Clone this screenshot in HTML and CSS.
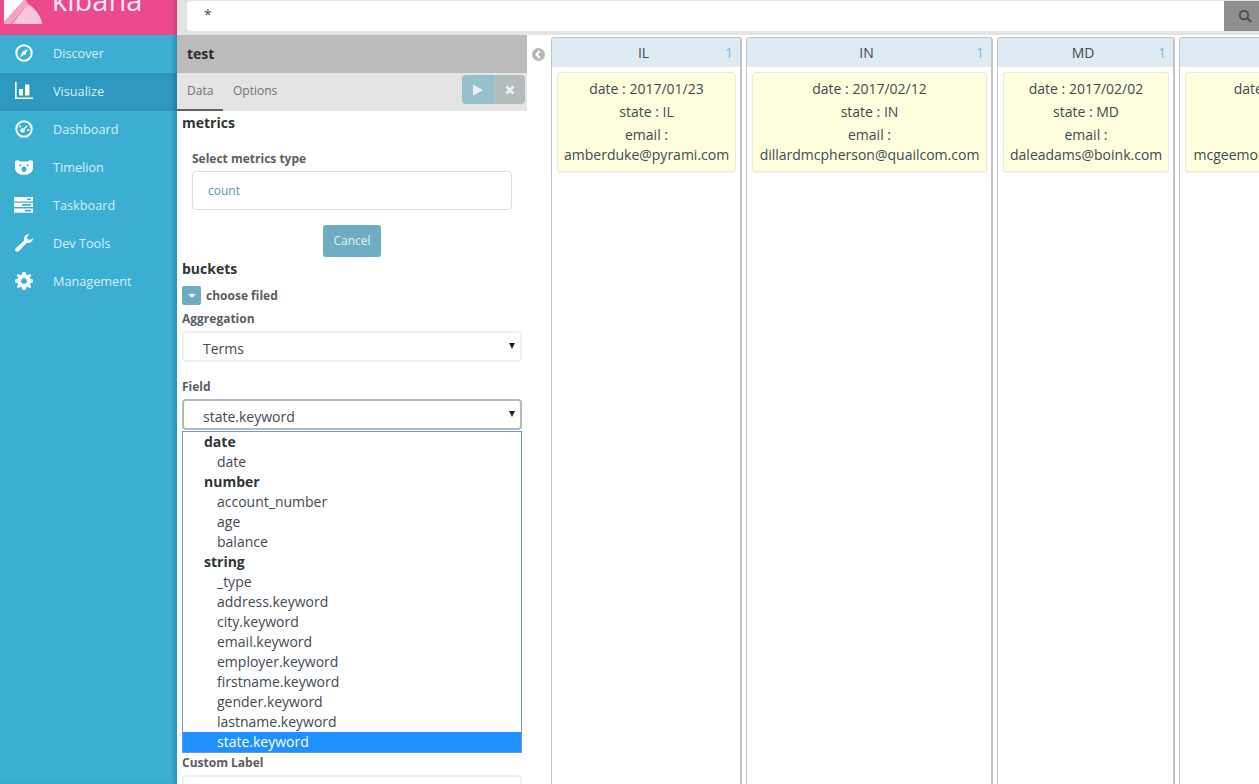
FILE: index.html
```html
<!DOCTYPE html>
<html lang="en">
<head>
  <meta charset="UTF-8">
  <title>test - Kibana</title>
  <link rel="stylesheet" href="styles.css">
</head>
<body>
  <nav class="sidebar">
    <div class="logo">
      <svg class="logo-mark" width="42" height="24" viewBox="0 0 42 24">
        <path d="M4 0 H24 L4 22 Z" fill="#fff"/>
        <path d="M4 24 V22 L24 0 H26 L28 4 L11 24 Z" fill="#f6a4c6"/>
        <path d="M12 24 L28 4 C36 9 41 16 42 24 Z" fill="#fac6dc"/>
      </svg>
      <span class="logo-text">kibana</span>
    </div>
    <a class="nav-item">
      <svg class="nav-icon" width="18" height="18" viewBox="0 0 18 18"><circle cx="9" cy="9" r="7.7" fill="none" stroke="#fff" stroke-width="2"/><path d="M13 5 L10.4 10.4 L5 13 L7.6 7.6 Z" fill="#fff"/></svg>
      Discover
    </a>
    <a class="nav-item active">
      <svg class="nav-icon" width="18" height="18" viewBox="0 0 18 18"><path d="M0 0 H1.6 V15.4 H18 V17 H0 Z M4 7 H8 V13.6 H4 Z M10 2.5 H14.4 V13.6 H10 Z" fill="#fff"/></svg>
      Visualize
    </a>
    <a class="nav-item">
      <svg class="nav-icon" width="18" height="18" viewBox="0 0 18 18"><circle cx="9" cy="9" r="7.7" fill="none" stroke="#fff" stroke-width="2"/><circle cx="7.6" cy="10.4" r="2.2" fill="#fff"/><path d="M8 10 L12 6" stroke="#fff" stroke-width="1.4"/><circle cx="5.2" cy="6.6" r="1" fill="#fff"/><circle cx="13.2" cy="10" r="1" fill="#fff"/></svg>
      Dashboard
    </a>
    <a class="nav-item">
      <svg class="nav-icon" width="18" height="18" viewBox="0 0 18 18"><path fill-rule="evenodd" d="M0 4 C0 2 3 1.5 5 3.5 H13 C15 1.5 18 2 18 4 V10 C18 14 14 17 9 17 C4 17 0 14 0 10 Z M5.5 6.2 a1 1 0 1 0 .01 0 Z M12.5 6.2 a1 1 0 1 0 .01 0 Z M9 8.5 C7 8.5 6.5 10 6.5 11.5 C6.5 13 7.5 14 9 14 C10.5 14 11.5 13 11.5 11.5 C11.5 10 11 8.5 9 8.5 Z" fill="#fff"/></svg>
      Timelion
    </a>
    <a class="nav-item">
      <svg class="nav-icon wide" width="19" height="18" viewBox="0 0 19 18"><path fill-rule="evenodd" d="M0 1 H19 V5.4 H0 Z M13 2.4 V4 H17 V2.4 Z M0 6.7 H19 V11.1 H0 Z M8 8.1 V9.7 H17 V8.1 Z M0 12.4 H19 V16.8 H0 Z M11 13.8 V15.4 H17 V13.8 Z" fill="#fff"/></svg>
      Taskboard
    </a>
    <a class="nav-item">
      <svg class="nav-icon" width="18" height="18" viewBox="0 0 18 18"><path d="M18 4 C18 7.5 15 9.6 11.8 8.8 L4.2 16.8 C3 18 1 18 .4 16.8 C-.2 15.8 0 14.8 1 14 L9.2 6.4 C8.4 3.2 10.6 0 14.2 0 L11.6 3.4 L13 5.6 L15.6 5.8 Z" fill="#fff"/></svg>
      Dev Tools
    </a>
    <a class="nav-item">
      <svg class="nav-icon" width="18" height="18" viewBox="0 0 18 18"><path fill-rule="evenodd" d="M7.4 0 H10.6 L11 2.5 L12.6 3.2 L14.7 1.7 L16.3 3.3 L14.8 5.4 L15.5 7 L18 7.4 V10.6 L15.5 11 L14.8 12.6 L16.3 14.7 L14.7 16.3 L12.6 14.8 L11 15.5 L10.6 18 H7.4 L7 15.5 L5.4 14.8 L3.3 16.3 L1.7 14.7 L3.2 12.6 L2.5 11 L0 10.6 V7.4 L2.5 7 L3.2 5.4 L1.7 3.3 L3.3 1.7 L5.4 3.2 L7 2.5 Z M9 6 a3 3 0 1 0 .01 0 Z" fill="#fff"/></svg>
      Management
    </a>
  </nav>

  <main class="main">
    <div class="query-bar">
      <div class="query-input">*</div>
      <div class="query-btn">
        <svg width="14" height="14" viewBox="0 0 14 14"><circle cx="6" cy="6" r="4.2" fill="none" stroke="#505050" stroke-width="2"/><path d="M9 9 L13 13" stroke="#505050" stroke-width="2.4"/></svg>
      </div>
    </div>

    <div class="content">
      <section class="panel">
        <div class="panel-title">test</div>
        <div class="tabs">
          <span class="tab selected">Data</span>
          <span class="tab">Options</span>
          <div class="tab-actions">
            <span class="run-btn"><svg width="12" height="12" viewBox="0 0 12 12"><path d="M1 .5 L11 6 L1 11.5 Z" fill="#e8f1f4"/></svg></span>
            <span class="close-btn"><svg width="10" height="10" viewBox="0 0 10 10"><path d="M1.5 1.5 L8.5 8.5 M8.5 1.5 L1.5 8.5" stroke="#eef1f1" stroke-width="2.6"/></svg></span>
          </div>
        </div>
        <div class="panel-body">
          <h4 class="section-title">metrics</h4>
          <div class="metrics-box">
            <label class="metrics-label">Select metrics type</label>
            <div class="metrics-input">count</div>
            <div class="cancel-row"><button type="button" class="cancel-btn">Cancel</button></div>
          </div>
          <h4 class="section-title">buckets</h4>
          <div class="choose-row">
            <span class="toggle-btn"><span class="toggle-arrow"></span></span>
            <span class="choose-label">choose filed</span>
          </div>
          <label class="field-label">Aggregation</label>
          <div class="select-box">Terms<span class="select-arrow"></span></div>
          <label class="field-label field-gap">Field</label>
          <div class="select-box open">state.keyword<span class="select-arrow"></span></div>
          <ul class="options">
            <li class="group">date</li>
            <li>date</li>
            <li class="group">number</li>
            <li>account_number</li>
            <li>age</li>
            <li>balance</li>
            <li class="group">string</li>
            <li>_type</li>
            <li>address.keyword</li>
            <li>city.keyword</li>
            <li>email.keyword</li>
            <li>employer.keyword</li>
            <li>firstname.keyword</li>
            <li>gender.keyword</li>
            <li>lastname.keyword</li>
            <li class="current">state.keyword</li>
          </ul>
          <label class="field-label custom-label">Custom Label</label>
          <div class="text-box"></div>
        </div>
      </section>

      <div class="collapse-col">
        <svg width="13" height="13" viewBox="0 0 13 13"><circle cx="6.5" cy="6.5" r="6.5" fill="#b5b5b5"/><path d="M7.8 3 L4.4 6.5 L7.8 10" fill="none" stroke="#fff" stroke-width="2"/></svg>
      </div>

      <div class="board">
        <div class="column col-il">
          <div class="column-head"><span>IL</span><span class="count">1</span></div>
          <div class="card">
            <p>date : 2017/01/23</p>
            <p>state : IL</p>
            <p class="email">email :<br>amberduke@pyrami.com</p>
          </div>
        </div>
        <div class="column col-in">
          <div class="column-head"><span>IN</span><span class="count">1</span></div>
          <div class="card">
            <p>date : 2017/02/12</p>
            <p>state : IN</p>
            <p class="email">email :<br>dillardmcpherson@quailcom.com</p>
          </div>
        </div>
        <div class="column col-md">
          <div class="column-head"><span>MD</span><span class="count">1</span></div>
          <div class="card">
            <p>date : 2017/02/02</p>
            <p>state : MD</p>
            <p class="email">email :<br>daleadams@boink.com</p>
          </div>
        </div>
        <div class="column col-last">
          <div class="column-head"><span>MS</span><span class="count">1</span></div>
          <div class="card">
            <p>date : 2017/02/20</p>
            <p>state : MS</p>
            <p class="email">email :<br>mcgeemooney@zillidium.com</p>
          </div>
        </div>
      </div>
    </div>
  </main>
</body>
</html>
```

FILE: styles.css
```css
* {
  box-sizing: border-box;
}
html, body {
  height: 100%;
}
body {
  margin: 0;
  display: flex;
  overflow: hidden;
  font-family: 'Open Sans', sans-serif;
  color: #3f4a52;
  background: #fff;
}

/* sidebar */
.sidebar {
  width: 177px;
  flex: none;
  background: #3caed2;
  box-shadow: inset -5px 0 4px -2px rgba(0,0,0,0.18);
}
.logo {
  height: 35px;
  background: #ec4a8c;
  display: flex;
  align-items: flex-end;
  overflow: hidden;
  box-shadow: inset -5px 0 4px -2px rgba(0,0,0,0.12);
}
.logo-mark {
  flex: none;
  margin-bottom: 11px;
}
.logo-text {
  margin-left: 10px;
  margin-bottom: 20px;
  font-size: 29px;
  line-height: 30px;
  color: #fdeaf2;
}
.nav-item {
  height: 38px;
  padding: 0 0 2px 15px;
  display: flex;
  align-items: center;
  font-size: 12.7px;
  color: #d6f0f8;
}
.nav-item.active {
  background: #2e98c1;
  box-shadow: inset -5px 0 4px -2px rgba(0,0,0,0.18);
}
.nav-icon {
  flex: none;
  margin-right: 20px;
}
.nav-icon.wide {
  margin-left: -1px;
}

/* query bar */
.main {
  flex: 1;
  min-width: 0;
  display: flex;
  flex-direction: column;
}
.query-bar {
  height: 35px;
  flex: none;
  padding: 1px 0 4px 10px;
  background: #e4e4e4;
  display: flex;
}
.query-input {
  flex: 1;
  padding: 2px 0 0 17px;
  background: #fff;
  border-radius: 4px 0 0 4px;
  font-size: 14px;
  line-height: 24px;
  color: #4a4a4a;
}
.query-btn {
  width: 35px;
  flex: none;
  padding-left: 7px;
  background: #8f8f8f;
  display: flex;
  align-items: center;
  justify-content: center;
}

/* editor panel */
.content {
  flex: 1;
  min-height: 0;
  display: flex;
}
.panel {
  width: 350px;
  flex: none;
}
.panel-title {
  height: 38px;
  padding-left: 10px;
  background: #bcbcbc;
  font-size: 14px;
  font-weight: 700;
  line-height: 38px;
  color: #2d2d2d;
}
.tabs {
  height: 38px;
  background: #e4e4e4;
  display: flex;
  align-items: stretch;
  font-size: 12px;
}
.tab {
  padding: 0 11px 0 10px;
  line-height: 36px;
  color: #6d7378;
}
.tab.selected {
  width: 46px;
  border-bottom: 2px solid #5f6468;
}
.tab-actions {
  margin: 2px 2px 7px auto;
  display: flex;
}
.run-btn, .close-btn {
  display: flex;
  align-items: center;
  justify-content: center;
}
.run-btn {
  width: 32px;
  background: #97c0cd;
  border-radius: 4px 0 0 4px;
}
.close-btn {
  width: 31px;
  background: #b4bcbe;
  border-radius: 0 4px 4px 0;
}
.panel-body {
  padding: 0 5px;
}
.section-title {
  margin: 0;
  font-size: 14px;
  font-weight: 700;
  line-height: 24px;
  color: #2f3437;
}
.metrics-box {
  padding: 16px 10px 0;
}
.metrics-label {
  display: block;
  font-size: 12px;
  font-weight: 700;
  line-height: 16px;
  color: #5a5f63;
}
.metrics-input {
  height: 39px;
  margin-top: 4px;
  padding-left: 15px;
  border: 1px solid #dddddd;
  border-radius: 4px;
  font-size: 12px;
  line-height: 37px;
  color: #5f94ab;
}
.cancel-row {
  margin-top: 15px;
  text-align: center;
}
.cancel-btn {
  width: 58px;
  height: 32px;
  padding: 0 0 2px;
  border: none;
  border-radius: 3px;
  background: #6eacc1;
  font-family: 'Open Sans', sans-serif;
  font-size: 12px;
  color: #e4f1f5;
}
.choose-row {
  margin-top: 5px;
  height: 19px;
  display: flex;
  align-items: center;
}
.toggle-btn {
  width: 19px;
  height: 19px;
  border-radius: 2px;
  background: #6eacc1;
  display: flex;
  align-items: center;
  justify-content: center;
}
.toggle-arrow {
  width: 0;
  height: 0;
  border-left: 4px solid transparent;
  border-right: 4px solid transparent;
  border-top: 4px solid #e8f3f6;
}
.choose-label {
  margin-left: 5px;
  font-size: 12px;
  font-weight: 700;
  color: #5a5f63;
}
.field-label {
  display: block;
  margin-top: 6px;
  font-size: 12px;
  font-weight: 700;
  line-height: 16px;
  color: #5a5f63;
}
.field-gap {
  margin-top: 17px;
}
.select-box {
  position: relative;
  height: 31px;
  margin-top: 4px;
  padding-left: 19px;
  border: 2px solid #edf1f0;
  border-radius: 4px;
  font-size: 14px;
  line-height: 31px;
  color: #3f4a52;
}
.select-box.open {
  border-color: #b2b8bc;
}
.select-arrow {
  position: absolute;
  right: 5px;
  top: 10px;
  width: 0;
  height: 0;
  border-left: 3px solid transparent;
  border-right: 3px solid transparent;
  border-top: 6px solid #222;
}
.options {
  list-style: none;
  margin: 1px 0 0;
  padding: 0;
  border: 1px solid #6f97d2;
  font-size: 14px;
  line-height: 20px;
  color: #3f4a52;
}
.options li {
  height: 20px;
  padding-left: 34px;
}
.options li.group {
  padding-left: 21px;
  font-weight: 700;
  color: #2f3437;
}
.options li.current {
  background: #1e90ff;
  color: #fff;
}
.custom-label {
  margin-top: 2px;
}
.text-box {
  height: 34px;
  margin-top: 4px;
  border: 2px solid #edf1f0;
  border-radius: 4px;
}

/* board */
.collapse-col {
  width: 24px;
  flex: none;
  padding: 9px 0 0 5px;
}
.board {
  flex: 1;
  min-width: 0;
  padding-top: 2px;
  display: flex;
  gap: 4px;
  overflow: hidden;
}
.column {
  flex: none;
  border: 1px solid #c4c4c4;
  border-width: 1px 2px 0 1px;
  border-radius: 3px 3px 0 0;
  background: #fff;
}
.col-il { width: 191px; }
.col-in { width: 247px; }
.col-md { width: 178px; }
.col-last { width: 224px; }
.column-head {
  position: relative;
  height: 29px;
  padding-right: 5px;
  background: #dfebf2;
  text-align: center;
  font-size: 14px;
  line-height: 29px;
  color: #3f4a52;
}
.count {
  position: absolute;
  right: 7px;
  top: 0;
  color: #7cb9ea;
}
.card {
  margin: 5px 4px 0 5px;
  padding: 6px;
  border: 1px solid #ece9d4;
  border-radius: 3px;
  background: #ffffdf;
  box-shadow: 0 1px 1px rgba(0,0,0,0.06);
  text-align: center;
  font-size: 14px;
  line-height: 20px;
  color: #3f4a52;
}
.card p {
  margin: 0 0 3px;
  white-space: nowrap;
}
.card p.email {
  margin-bottom: 0;
}
```
